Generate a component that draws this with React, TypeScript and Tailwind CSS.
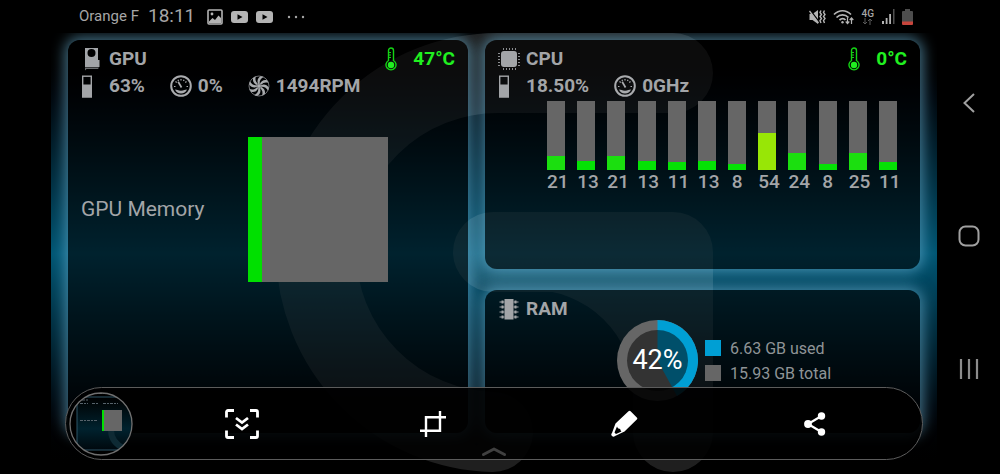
import type { ReactNode } from 'react';

const cores = [21, 13, 21, 13, 11, 13, 8, 54, 24, 8, 25, 11];

function coreColor(load: number) {
  if (load > 50) return 'bg-[#98e606]';
  if (load > 20) return 'bg-[#1bdf0f]';
  return 'bg-[#05e205]';
}

function GpuIcon() {
  return (
    <svg width="22" height="23" viewBox="0 0 22 23" fill="#a3a5a8">
      <path
        fillRule="evenodd"
        d="M4 0h13v12h1.500v7H4zM10.500 1a4 4 0 1 0 0 8 4 4 0 0 0 0-8z"
      />
      <path d="M4 19.500h14l-1 1.500H5.500L4 22.500z" fill="#6c6e70" />
    </svg>
  );
}

function CpuIcon() {
  return (
    <svg width="22" height="22" viewBox="0 0 22 22" fill="#a3a5a8">
      <rect x="3" y="3" width="16" height="16" rx="3" />
      <path
        d="M5 1h13M5 21h13M1 5v13M21 5v13"
        stroke="#8b8d90"
        strokeWidth="2"
        strokeDasharray="1 2"
      />
    </svg>
  );
}

function RamIcon() {
  return (
    <svg width="22" height="22" viewBox="0 0 22 22" fill="#a3a5a8">
      <rect x="6.500" y="1" width="9" height="20.500" />
      <path
        d="M1.500 4h5M1.500 9h5M1.500 14h5M1.500 19h5M15.500 4h5M15.500 9h5M15.500 14h5M15.500 19h5"
        stroke="#a3a5a8"
        strokeWidth="1.200"
      />
      <path
        d="M4.500 2.500v3M4.500 7.500v3M4.500 12.500v3M4.500 17.500v3M17.500 2.500v3M17.500 7.500v3M17.500 12.500v3M17.500 17.500v3"
        stroke="#a3a5a8"
        strokeWidth="2"
      />
    </svg>
  );
}

function LoadIcon() {
  return (
    <svg width="12" height="23" viewBox="0 0 12 23">
      <rect x="1.700" y="1.200" width="8.600" height="20.600" fill="none" stroke="#a3a5a8" strokeWidth="1.400" />
      <rect x="1" y="9.500" width="10" height="13" fill="#a3a5a8" />
    </svg>
  );
}

function GaugeIcon() {
  return (
    <svg width="22" height="22" viewBox="0 0 22 22" fill="none" stroke="#a9abae">
      <circle cx="11" cy="11" r="9.800" strokeWidth="2" />
      <path
        d="M4 11.500h1.500M16.500 11.500H18M5.500 6.500l1.200 1M16.500 6.500l-1.200 1M11 4v1.500M8 4.800l.5 1.200M14 4.800l-.5 1.200"
        strokeWidth="1.200"
      />
      <path d="M8.200 6.800l3.300 5.700" strokeWidth="1.700" />
      <path d="M5 14.500c2.200 0 3 1.200 6 1.200s3.800-1.200 6-1.200c-1 2.500-3.200 4-6 4s-5-1.500-6-4z" fill="#a9abae" stroke="none" />
    </svg>
  );
}

function FanIcon() {
  return (
    <svg width="22" height="22" viewBox="0 0 22 22">
      <circle cx="11" cy="11" r="10" fill="none" stroke="#8b8d90" strokeWidth="0.800" />
      {[0, 45, 90, 135, 180, 225, 270, 315].map((angle) => (
        <path
          key={angle}
          d="M10.300 9C8.800 6.500 9.500 3 12.500 1.200c1.300 0 2.300.4 3 .9C12.800 3.500 11.400 5.500 11.700 9z"
          fill="#a9abae"
          transform={`rotate(${angle} 11 11)`}
        />
      ))}
      <circle cx="11" cy="11" r="2" fill="#a9abae" />
    </svg>
  );
}

function ThermometerIcon() {
  return (
    <svg width="12" height="24" viewBox="0 0 12 24" fill="none" stroke="#14d414">
      <path d="M3.500 13.500V3.500a2.500 2.500 0 0 1 5 0v10a5 5 0 1 1-5 0z" strokeWidth="1.400" />
      <path d="M4 5.500h2M4 8h2M4 10.500h2" strokeWidth="1" />
      <circle cx="6" cy="18" r="3.200" fill="#20f020" stroke="none" />
    </svg>
  );
}

function Panel({ className, children }: { className?: string; children: ReactNode }) {
  return (
    <section
      className={`relative flex flex-col gap-[3px] rounded-xl bg-black/60 px-[13px] pt-[7px] shadow-[0_0_14px_3px_rgba(105,178,212,0.62)] ${className ?? ''}`}
    >
      {children}
    </section>
  );
}

function PanelHeader({ icon, title, temp }: { icon: ReactNode; title: string; temp?: string }) {
  return (
    <header className="flex h-6 items-center text-[19px] leading-6 font-bold">
      <span className="w-7">{icon}</span>
      <h2>{title}</h2>
      {temp && (
        <p className="ml-auto flex items-center gap-4 text-[#20f020]">
          <ThermometerIcon />
          {temp}
        </p>
      )}
    </header>
  );
}

function Stats({ load, children }: { load: string; children: ReactNode }) {
  return (
    <div className="flex h-6 items-center gap-[25px] text-[19px] leading-6 font-bold">
      <p className="flex items-center">
        <span className="w-7">
          <LoadIcon />
        </span>
        {load}
      </p>
      {children}
    </div>
  );
}

function Watermark() {
  return (
    <svg
      className="pointer-events-none absolute inset-0 h-full w-full"
      viewBox="51 33 886 441"
      aria-hidden="true"
    >
      <g opacity="0.120">
        <path
          d="M673 73H498A182 182 0 0 0 316 252A182 182 0 0 0 493 432M493 252H673V432"
          fill="none"
          stroke="#fff"
          strokeWidth="80"
          strokeLinecap="round"
          strokeLinejoin="round"
        />
        <path d="M530 290A102 102 0 0 1 634 392V290z" fill="#fff" />
      </g>
    </svg>
  );
}

function StatusBar() {
  return (
    <header className="flex h-[33px] items-center pr-6 pl-7 text-[#a6a6a6]">
      <span className="text-[15px]">Orange F</span>
      <time className="ml-[9px] text-[19px]">18:11</time>
      <svg className="ml-3" width="16" height="16" viewBox="0 0 16 16">
        <rect x="1" y="1" width="14" height="14" rx="1" fill="none" stroke="#b4b4b4" strokeWidth="1.600" />
        <path d="M2 12.500l3.500-3.500 2.500 2 3.500-4.500L14 9v5H2z" fill="#b4b4b4" />
        <circle cx="5" cy="5" r="1.400" fill="#b4b4b4" />
      </svg>
      {[0, 1].map((i) => (
        <svg key={i} className="ml-2" width="17" height="12" viewBox="0 0 17 12">
          <rect width="17" height="12" rx="3" fill="#b4b4b4" />
          <path d="M6.500 3.200v5.600L11.500 6z" fill="#000" />
        </svg>
      ))}
      <svg className="ml-[14px]" width="18" height="4" viewBox="0 0 18 4" fill="#a6a6a6">
        <circle cx="2" cy="2" r="1.200" />
        <circle cx="9" cy="2" r="1.200" />
        <circle cx="16" cy="2" r="1.200" />
      </svg>

      <div className="ml-auto flex items-center gap-[7px]">
        <svg width="17" height="16" viewBox="0 0 17 16" fill="none" stroke="#b4b4b4">
          <path d="M0.500 5h3L9 1v14L3.500 11h-3z" fill="#b4b4b4" stroke="none" />
          <path d="M1 1l10 13" stroke="#000" strokeWidth="1.500" />
          <path d="M0.500 2l9 12" strokeWidth="1.300" />
          <path d="M12 1.500l-1 2 1.500 2-1.500 2 1.500 2-1.500 2 1 2.500M15.500 1.500l-1 2 1.500 2-1.500 2 1.500 2-1.500 2 1 2.500" strokeWidth="1.400" />
        </svg>
        <svg width="22" height="16" viewBox="0 0 22 16" fill="none" stroke="#b4b4b4" strokeWidth="1.700">
          <path d="M1 5.500c5-5 12-5 17 0M3.500 8.500c3.500-3.500 8.500-3.500 12 0M6.500 11c2-1.800 4.500-1.800 6 0" />
          <circle cx="9.500" cy="13.300" r="1.200" fill="#b4b4b4" stroke="none" />
          <path d="M14.500 8.500v6M12.700 12.500l1.800 2 1.800-2M18.500 15V9M16.700 11l1.800-2 1.800 2" strokeWidth="1.200" />
        </svg>
        <div className="flex flex-col items-center">
          <span className="text-[10px] leading-[9px] font-medium">4G</span>
          <svg width="11" height="7" viewBox="0 0 11 7" fill="none" stroke="#5a5a5a">
            <path d="M3 0v6M1 4l2 2 2-2M8 7V1M6 3l2-2 2 2" />
          </svg>
        </div>
        <svg width="14" height="15" viewBox="0 0 14 15">
          <path d="M1 12h2v3H1zM4.700 9h1.800v6H4.700zM8.200 5H10v10H8.200z" fill="#b4b4b4" />
          <path d="M12 0h1.500v15H12z" fill="#505050" />
        </svg>
        <svg width="11" height="16" viewBox="0 0 11 16">
          <path d="M3 0h5v2h2a1 1 0 0 1 1 1v10H0V3a1 1 0 0 1 1-1h2z" fill="#4d4d4d" />
          <path d="M0 12.500h11V15a1 1 0 0 1-1 1H1a1 1 0 0 1-1-1z" fill="#c8453c" />
        </svg>
      </div>
    </header>
  );
}

function GpuPanel() {
  return (
    <Panel className="row-span-2">
      <PanelHeader icon={<GpuIcon />} title="GPU" temp="47°C" />
      <Stats load="63%">
        <p className="flex items-center gap-1.5">
          <GaugeIcon />
          0%
        </p>
        <p className="flex items-center gap-1.5">
          <FanIcon />
          1494RPM
        </p>
      </Stats>
      <div className="mt-9 flex items-center">
        <p className="w-[167px] text-[21px]">GPU Memory</p>
        <div className="h-[145px] w-[140px] bg-[#666]">
          <div className="h-full w-1/10 bg-[#00e000]" />
        </div>
      </div>
    </Panel>
  );
}

function CpuPanel() {
  return (
    <Panel>
      <PanelHeader icon={<CpuIcon />} title="CPU" temp="0°C" />
      <Stats load="18.50%">
        <p className="flex items-center gap-1.5">
          <GaugeIcon />
          0GHz
        </p>
      </Stats>
      <ul className="mr-[10px] ml-[49px] flex justify-between">
        {cores.map((load, i) => (
          <li key={i} className="w-[18px]">
            <div className="flex h-[69px] flex-col justify-end bg-[#666]">
              <div className={coreColor(load)} style={{ height: `${load}%` }} />
            </div>
            <p className="text-center text-[19px] leading-6 font-medium">{load}</p>
          </li>
        ))}
      </ul>
    </Panel>
  );
}

function RamPanel() {
  return (
    <Panel>
      <PanelHeader icon={<RamIcon />} title="RAM" />
      <div className="-mt-1 ml-[119px] flex items-center gap-[7px]">
        <svg width="81" height="81" viewBox="0 0 81 81">
          <circle cx="40.500" cy="40.500" r="40.500" fill="#666" />
          <path d="M40.500 40.500V0A40.500 40.500 0 0 1 60 76z" fill="#009fd4" />
          <circle cx="40.500" cy="40.500" r="30.500" fill="#000" fillOpacity="0.500" />
          <text x="40.500" y="49" textAnchor="middle" fontSize="27" fill="#fff">
            42%
          </text>
        </svg>
        <ul className="text-base leading-[25px] text-[#8f9497]">
          <li className="flex items-center gap-[9px]">
            <span className="size-4 bg-[#009fd4]" />
            6.63 GB used
          </li>
          <li className="flex items-center gap-[9px]">
            <span className="size-4 bg-[#666]" />
            15.93 GB total
          </li>
        </ul>
      </div>
    </Panel>
  );
}

function Thumbnail() {
  return (
    <svg width="64" height="64" viewBox="0 0 64 64">
      <defs>
        <clipPath id="thumb">
          <circle cx="32" cy="32" r="31" />
        </clipPath>
        <linearGradient id="thumbBg" x1="0" y1="0" x2="0" y2="1">
          <stop offset="0" stopColor="#000" />
          <stop offset="0.600" stopColor="#00222e" />
          <stop offset="1" stopColor="#00080d" />
        </linearGradient>
      </defs>
      <g clipPath="url(#thumb)">
        <rect width="64" height="64" fill="#000" />
        <rect x="8" y="5" width="56" height="53" fill="url(#thumbBg)" />
        <path d="M8 5v53h56M8 5h56" fill="none" stroke="#2c5566" />
        <path d="M26 1.500h12" stroke="#777" strokeDasharray="3 1" />
        <path d="M13 8h6M11 11.500h8M23 11.500h6M34 11.500h15M11 28.500h17" stroke="#56636b" strokeDasharray="3 1 2 1" />
        <path d="M42 38c0 8 5 15 14 19" fill="none" stroke="#0e2a34" strokeWidth="6" />
        <rect x="34" y="18" width="19" height="21" fill="#666" />
        <rect x="33" y="18" width="2" height="21" fill="#00e000" />
      </g>
      <circle cx="32" cy="32" r="31" fill="none" stroke="#707070" strokeWidth="1.300" />
    </svg>
  );
}

function CaptureToolbar() {
  const action = 'flex h-full flex-1 items-center justify-center';
  return (
    <div className="absolute right-[77px] bottom-[14px] left-[65px] flex h-[73px] items-center rounded-full border border-[#5c5c5c] bg-black/90 pr-[11px] pl-[3px]">
      <button aria-label="Open screenshot" className="mr-[13px]">
        <Thumbnail />
      </button>
      <button aria-label="Scroll capture" className={action}>
        <svg width="34" height="30" viewBox="0 0 34 30" fill="none" stroke="#fff" strokeWidth="2.800">
          <path d="M1.500 8.500V3a1.500 1.500 0 0 1 1.500-1.500h6M25 1.500h6A1.500 1.500 0 0 1 32.500 3v5.500M32.500 21.500V27a1.500 1.500 0 0 1-1.500 1.500h-6M9 28.500H3A1.500 1.500 0 0 1 1.500 27v-5.500" />
          <path d="M11 9l6 4.500L23 9M11 15.500l6 4.500 6-4.500" />
        </svg>
      </button>
      <button aria-label="Crop" className={action}>
        <svg width="26" height="26" viewBox="0 0 26 26" fill="none" stroke="#fff" strokeWidth="2.400">
          <path d="M6 26V6.200h20M0 19.800h20V0" />
        </svg>
      </button>
      <button aria-label="Draw" className={action}>
        <svg width="27" height="27" viewBox="0 0 27 27">
          <path
            d="M17.500 1.200a1.500 1.500 0 0 1 2.100 0l6.200 6.200a1.500 1.500 0 0 1 0 2.100L13.500 21.500 4 26a2 2 0 0 1-3-3L4.500 13.500z"
            fill="#fff"
          />
          <path d="M6 16.500L3.500 22.500l1.500 1.500 5.500-2.500c-.8-.8-1.200-1.400-1.300-2.500-1.200-.1-2.500-.7-3.200-2.500z" fill="#000" />
        </svg>
      </button>
      <button aria-label="Share" className={action}>
        <svg width="22" height="24" viewBox="0 0 22 24" fill="#fff">
          <path d="M17.500 4L4 12l13.500 8" fill="none" stroke="#fff" strokeWidth="2.200" />
          <circle cx="17.500" cy="4" r="3.700" />
          <circle cx="4" cy="12" r="3.900" />
          <circle cx="17.500" cy="20" r="3.700" />
        </svg>
      </button>
      <svg
        className="absolute bottom-0.5 left-1/2 -translate-x-1/2"
        width="26"
        height="11"
        viewBox="0 0 26 11"
        fill="none"
        stroke="#404040"
        strokeWidth="3"
        strokeLinecap="round"
        strokeLinejoin="round"
      >
        <path d="M2.500 8.500L13 3l10.500 5.500" />
      </svg>
    </div>
  );
}

function SystemNav() {
  const key = 'flex flex-1 items-center justify-center';
  return (
    <nav className="flex w-[63px] flex-col pt-9 pb-[38px]">
      <button aria-label="Back" className={key}>
        <svg width="14" height="20" viewBox="0 0 14 20" fill="none" stroke="#a0a0a0" strokeWidth="2">
          <path d="M12 1L2.500 10l9.500 9" />
        </svg>
      </button>
      <button aria-label="Home" className={key}>
        <svg width="22" height="22" viewBox="0 0 22 22" fill="none" stroke="#a0a0a0" strokeWidth="2">
          <rect x="1.500" y="1.500" width="19" height="19" rx="6" />
        </svg>
      </button>
      <button aria-label="Recent apps" className={key}>
        <svg width="20" height="20" viewBox="0 0 20 20" fill="none" stroke="#8c8c8c" strokeWidth="2.200">
          <path d="M2 0v20M10 0v20M18 0v20" />
        </svg>
      </button>
    </nav>
  );
}

export default function App() {
  return (
    <div className="relative flex min-h-screen bg-black font-['Roboto',sans-serif] text-[#a3a5a8]">
      <div className="flex flex-1 flex-col pl-[51px]">
        <StatusBar />
        <main className="relative grid flex-1 grid-cols-[400fr_435fr] grid-rows-[229fr_143fr] gap-x-[17px] gap-y-[21px] overflow-hidden bg-linear-to-b from-black via-[#005674] to-black px-[17px] pt-[7px] pb-[41px]">
          <Watermark />
          <GpuPanel />
          <CpuPanel />
          <RamPanel />
        </main>
      </div>
      <SystemNav />
      <CaptureToolbar />
    </div>
  );
}
